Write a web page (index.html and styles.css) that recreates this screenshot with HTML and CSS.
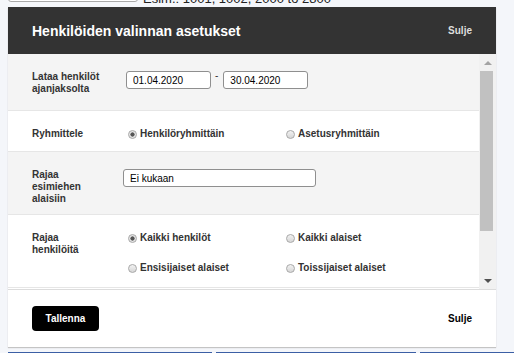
FILE: index.html
```html
<!DOCTYPE html>
<html lang="fi">
<head>
    <meta charset="UTF-8">
    <title>Henkilöiden valinnan asetukset</title>
    <link rel="stylesheet" href="styles.css">
</head>
<body>
    <div class="page-search">
      <input type="text" class="search-input">
      <span class="search-hint">Esim.: 1001, 1002, 2000 to 2800</span>
    </div>

    <div class="modal">
      <div class="modal-header">
        <h1 class="modal-title">Henkilöiden valinnan asetukset</h1>
        <a class="close-link">Sulje</a>
      </div>

      <div class="modal-body">
        <div class="settings">
          <div class="row row-dates">
            <label class="row-label">Lataa henkilöt<br>ajanjaksolta</label>
            <div class="row-field">
              <input type="text" class="date-input" value="01.04.2020">
              <span class="dash">-</span>
              <input type="text" class="date-input" value="30.04.2020">
            </div>
          </div>

          <div class="row row-group">
            <label class="row-label">Ryhmittele</label>
            <div class="options">
              <label class="option"><input type="radio" name="group" checked>Henkilöryhmittäin</label>
              <label class="option"><input type="radio" name="group">Asetusryhmittäin</label>
            </div>
          </div>

          <div class="row row-boss">
            <label class="row-label">Rajaa<br>esimiehen<br>alaisiin</label>
            <input type="text" class="text-input" value="Ei kukaan">
          </div>

          <div class="row row-people">
            <label class="row-label">Rajaa<br>henkilöitä</label>
            <div class="options">
              <label class="option"><input type="radio" name="people" checked>Kaikki henkilöt</label>
              <label class="option"><input type="radio" name="people">Kaikki alaiset</label>
              <label class="option"><input type="radio" name="people">Ensisijaiset alaiset</label>
              <label class="option"><input type="radio" name="people">Toissijaiset alaiset</label>
            </div>
          </div>
        </div>

        <div class="scrollbar">
          <div class="sb-button"><span class="sb-arrow up"></span></div>
          <div class="sb-track"><div class="sb-thumb"></div></div>
          <div class="sb-button"><span class="sb-arrow down"></span></div>
        </div>
      </div>

      <div class="modal-footer">
        <button type="button" class="btn-save">Tallenna</button>
        <a class="close-link dark">Sulje</a>
      </div>
    </div>

    <div class="tiles">
      <div class="tile"></div>
      <div class="tile"></div>
      <div class="tile"></div>
    </div>
</body>
</html>
```

FILE: styles.css
```css
html, body { overflow: hidden; }
body {
    margin: 0;
    background: #f4f6fa;
    font-family: 'Liberation Sans', Arial, sans-serif;
    color: #333;
}

/* page behind the dialog */
.page-search {
    display: flex;
    align-items: flex-end;
    gap: 5px;
    height: 22px;
    margin: -20px 8px 0 8px;
}
.search-input {
    width: 130px;
    height: 22px;
    box-sizing: border-box;
    border: 1px solid #a9a9a9;
    border-radius: 3px;
    background: #fff;
}
.search-hint { font-size: 13px; line-height: 14px; color: #222; margin-bottom: -4px; }

/* dialog */
.modal {
    width: 488px;
    margin: 5px 8px 0 8px;
    background: #fff;
    box-shadow: 0 1px 1px #c4c4c4;
}
.modal-header {
    height: 47px;
    background: #333;
    display: flex;
    align-items: center;
    justify-content: space-between;
    padding: 0 24px;
}
.modal-title { margin: 0; font-size: 14px; font-weight: bold; color: #fff; }
.close-link { font-size: 10px; font-weight: bold; color: #ddd; cursor: pointer; }
.close-link.dark { color: #000; }

.modal-body { display: flex; height: 235px; }
.settings { flex: 1; overflow: hidden; }

.row {
    display: flex;
    align-items: flex-start;
    box-sizing: border-box;
    padding: 17px 0 0 24px;
    border-bottom: 1px solid #e6e6e6;
}
.row-dates { height: 57px; background: #f4f4f4; }
.row-group { height: 41px; }
.row-boss { height: 63px; background: #f4f4f4; }
.row-people { height: 73px; }

.row-label {
    width: 94px;
    flex: none;
    font-size: 10px;
    font-weight: bold;
    line-height: 12px;
    color: #333;
}
.row-field { display: flex; align-items: flex-start; }
.dash { font-size: 10px; line-height: 10px; margin: 0 5px 0 4px; color: #333; }

.date-input, .text-input {
    height: 18px;
    box-sizing: border-box;
    border: 1px solid #8f8f8f;
    border-radius: 3px;
    padding: 0 6px;
    font-family: 'Liberation Sans', Arial, sans-serif;
    font-size: 10px;
    color: #000;
    background: #fff;
}
.date-input { width: 85px; }
.text-input { width: 193px; margin-left: -3px; }

.options {
    display: grid;
    grid-template-columns: 158px 158px;
    row-gap: 18px;
    margin-left: 2px;
}
.option {
    display: flex;
    align-items: center;
    font-size: 10px;
    font-weight: bold;
    line-height: 12px;
    color: #333;
}
.option input {
    appearance: none;
    width: 9px;
    height: 9px;
    margin: 0 3px 0 0;
    border: 1px solid #a8a8a8;
    border-radius: 50%;
    background: linear-gradient(#f2f2f2, #d6d6d6);
}
.option input:checked {
    background: radial-gradient(circle, #555 0, #555 1.8px, #e4e4e4 2.4px);
}

/* scrollbar */
.scrollbar {
    width: 17px;
    flex: none;
    display: flex;
    flex-direction: column;
    background: #f1f1f1;
}
.sb-button { height: 17px; display: flex; align-items: center; justify-content: center; }
.sb-track { flex: 1; }
.sb-thumb { height: 160px; margin: 0 3px 0 1px; background: #c1c1c1; }
.sb-arrow { width: 0; height: 0; border-left: 4px solid transparent; border-right: 4px solid transparent; }
.sb-arrow.up { border-bottom: 4px solid #a3a3a3; }
.sb-arrow.down { border-top: 4px solid #505050; }

.modal-footer {
    height: 58px;
    box-sizing: border-box;
    border-top: 1px solid #dcdcdc;
    display: flex;
    align-items: center;
    justify-content: space-between;
    padding: 0 24px;
}
.btn-save {
    width: 67px;
    height: 25px;
    border: none;
    border-radius: 4px;
    background: #000;
    color: #fff;
    font-family: 'Liberation Sans', Arial, sans-serif;
    font-size: 10px;
    font-weight: bold;
}

/* tiles below the dialog */
.tiles { display: flex; gap: 4px; margin: 5px 0 0 8px; }
.tile { flex: none; height: 20px; background: #fff; border-top: 1px solid #3b5fa5; }
.tile:nth-child(1) { width: 204px; }
.tile:nth-child(2), .tile:nth-child(3) { width: 200px; }
```
